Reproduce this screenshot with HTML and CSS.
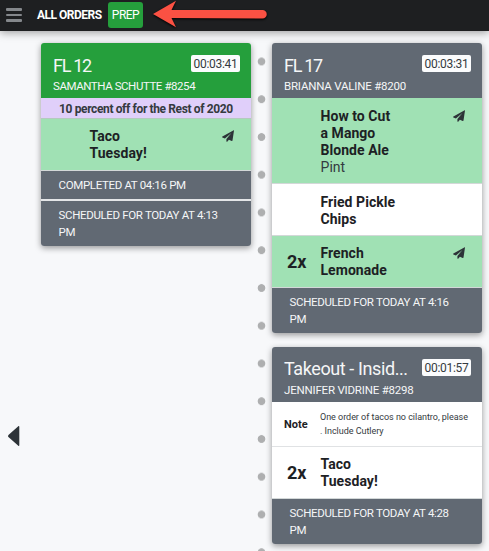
FILE: index.html
```html
<!DOCTYPE html>
<html lang="en">
<head>
    <meta charset="UTF-8">
    <meta name="viewport" content="width=device-width, initial-scale=1.0">
    <title>All Orders - Prep</title>
    <link rel="stylesheet" href="styles.css">
</head>
<body>
    <svg class="defs" width="0" height="0">
        <symbol id="plane" viewBox="0 0 12 12">
            <path d="M11.7 .2 .4 6.5c-.5.3-.4.8 0 1l2.5 1L9.4 2.9 4.4 9v2.2c0 .6.7.8 1 .4l1.5-1.8 2.8 1.2c.4.2.8 0 .8-.4L12 .6c.1-.4-.1-.5-.3-.4z"/>
        </symbol>
    </svg>

    <div class="header">
        <div class="menu-btn"><span></span><span></span><span></span></div>
        <div class="header-title">ALL ORDERS</div>
        <div class="prep-btn">PREP</div>
        <svg class="arrow" width="116" height="30" viewBox="0 0 116 30">
            <path d="M1 14 24 .7 19.500 10H110.500a4 4 0 0 1 0 8.500L19.500 18 24 27.200z"/>
        </svg>
    </div>

    <div class="board">
        <div class="gutter">
            <svg width="12" height="20" viewBox="0 0 12 20">
                <path d="M10.300.3.700 8.700a1.800 1.800 0 0 0 0 2.600l9.600 8.400c.5.400 1 .2 1-.4V.7c0-.6-.5-.8-1-.4z"/>
            </svg>
        </div>

        <div class="column">
            <div class="card">
                <div class="card-head green">
                    <div class="head-row">
                        <div class="table-name">FL 12</div>
                        <div class="timer">00:03:41</div>
                    </div>
                    <div class="customer long">SAMANTHA SCHUTTE #8254</div>
                </div>
                <div class="promo">10 percent off for the Rest of 2020</div>
                <div class="item sent">
                    <div class="qty"></div>
                    <div class="item-name">Taco<br>Tuesday!</div>
                    <svg class="plane"><use href="#plane"/></svg>
                </div>
                <div class="card-foot completed">COMPLETED AT 04:16 PM</div>
                <div class="card-foot">SCHEDULED FOR TODAY AT 4:13<br>PM</div>
            </div>
        </div>

        <div class="dots"></div>

        <div class="column">
            <div class="card">
                <div class="card-head">
                    <div class="head-row">
                        <div class="table-name">FL 17</div>
                        <div class="timer">00:03:31</div>
                    </div>
                    <div class="customer">BRIANNA VALINE #8200</div>
                </div>
                <div class="item sent roomy">
                    <div class="qty"></div>
                    <div class="item-name">How to Cut<br>a Mango<br>Blonde Ale<div class="modifier">Pint</div></div>
                    <svg class="plane"><use href="#plane"/></svg>
                </div>
                <div class="item roomy">
                    <div class="qty"></div>
                    <div class="item-name">Fried Pickle<br>Chips</div>
                </div>
                <div class="item sent">
                    <div class="qty">2x</div>
                    <div class="item-name">French<br>Lemonade</div>
                    <svg class="plane"><use href="#plane"/></svg>
                </div>
                <div class="card-foot">SCHEDULED FOR TODAY AT 4:16<br>PM</div>
            </div>

            <div class="card">
                <div class="card-head">
                    <div class="head-row">
                        <div class="table-name takeout">Takeout - Insid...</div>
                        <div class="timer">00:01:57</div>
                    </div>
                    <div class="customer">JENNIFER VIDRINE #8298</div>
                </div>
                <div class="note">
                    <div class="note-label">Note</div>
                    <div class="note-text">One order of tacos no cilantro, please<br>. Include Cutlery</div>
                </div>
                <div class="item">
                    <div class="qty">2x</div>
                    <div class="item-name">Taco<br>Tuesday!</div>
                </div>
                <div class="card-foot">SCHEDULED FOR TODAY AT 4:28<br>PM</div>
            </div>
        </div>
    </div>
</body>
</html>
```
FILE: styles.css
```css
* {
    margin: 0;
    padding: 0;
    box-sizing: border-box;
}

body {
    font-family: Roboto, 'Liberation Sans', sans-serif;
    background: #f7f8fa;
    color: #1d2124;
    height: 551px;
    overflow: hidden;
}

.defs {
    display: block;
}

.header {
    display: flex;
    align-items: flex-start;
    height: 31px;
    padding-left: 6px;
    background: #1e1f21;
    color: #ffffff;
    box-shadow: 0 2px 8px rgba(0, 0, 0, 0.35);
}

.menu-btn {
    display: flex;
    flex-direction: column;
    gap: 3px;
    width: 16px;
    margin-top: 8px;
}

.menu-btn span {
    height: 2.500px;
    border-radius: 1px;
    background: #85888c;
}

.header-title {
    width: 71px;
    margin-left: 15px;
    font-size: 12px;
    font-weight: 700;
    line-height: 30px;
    letter-spacing: -0.500px;
    white-space: nowrap;
}

.prep-btn {
    width: 35px;
    height: 26px;
    margin-top: 2px;
    border-radius: 3px;
    background: #259f3c;
    font-size: 12px;
    line-height: 26px;
    letter-spacing: -0.500px;
    text-align: center;
}

.arrow {
    margin-left: 9px;
    fill: #fb5143;
    filter: drop-shadow(0 1px 1px #000000);
}

.board {
    display: flex;
    height: 520px;
}

.gutter {
    width: 41px;
    padding: 395px 0 0 8px;
    fill: #2d3338;
}

.column {
    display: flex;
    flex-direction: column;
    gap: 14px;
    width: 210px;
    padding-top: 12px;
}

.dots {
    width: 21px;
    background: radial-gradient(circle at 10.500px 11px, #aeafb0 3.500px, transparent 4.200px) 0 19.500px / 21px 37.750px;
}

.card {
    border-radius: 3px;
    background: #ffffff;
    box-shadow: 0 2px 6px rgba(0, 0, 0, 0.4);
}

.card-head {
    height: 55px;
    padding: 12px 11px 0 12px;
    border-radius: 3px 3px 0 0;
    background: #616973;
    color: #f5f6f7;
}

.card-head.green {
    background: #259f3c;
}

.head-row {
    display: flex;
    justify-content: space-between;
    height: 23px;
}

.table-name {
    font-size: 18px;
    line-height: 22px;
    letter-spacing: -1.300px;
    white-space: nowrap;
}

.table-name.takeout {
    line-height: 20px;
    letter-spacing: -0.400px;
}

.timer {
    width: 49px;
    height: 17px;
    border-radius: 2px;
    background: #fbfcfd;
    color: #343a40;
    font-size: 12px;
    line-height: 18px;
    letter-spacing: -0.300px;
    text-align: center;
}

.customer {
    font-size: 11.500px;
    line-height: 17px;
    letter-spacing: -0.200px;
    white-space: nowrap;
}

.customer.long {
    letter-spacing: -0.430px;
}

.promo {
    height: 21px;
    padding-left: 18px;
    border-bottom: 1px solid #b5c9bf;
    background: #e0cffa;
    color: #343a40;
    font-size: 12px;
    font-weight: 700;
    line-height: 22px;
    letter-spacing: -0.370px;
    white-space: nowrap;
}

.item {
    display: flex;
    padding: 9px 17px 8px 15px;
    border-bottom: 1px solid #d3d8d8;
}

.item.roomy {
    padding-top: 10px;
    padding-bottom: 7px;
}

.item.sent {
    background: #a0e1b4;
}

.qty {
    align-self: center;
    width: 33.500px;
    font-size: 18px;
    font-weight: 700;
    line-height: 20px;
}

.item-name {
    flex: 1;
    font-size: 14px;
    font-weight: 700;
    line-height: 17px;
    letter-spacing: 0.050px;
    white-space: nowrap;
}

.modifier {
    color: #343a40;
    font-weight: 400;
}

.plane {
    width: 12px;
    height: 12px;
    margin-top: 2px;
    fill: #2d3338;
}

.note {
    display: flex;
    align-items: center;
    height: 45px;
    padding-left: 12px;
    border-bottom: 1px solid #e0e2e4;
}

.note-label {
    width: 36px;
    font-size: 11px;
    font-weight: 700;
}

.note-text {
    color: #343a40;
    font-size: 9px;
    line-height: 14px;
    letter-spacing: -0.030px;
    white-space: nowrap;
}

.card-foot {
    height: 45px;
    padding: 6px 0 0 17.500px;
    border-radius: 0 0 3px 3px;
    background: #616973;
    color: #f5f6f7;
    font-size: 11.500px;
    line-height: 17px;
    letter-spacing: -0.340px;
    white-space: nowrap;
}

.card-foot.completed {
    height: 30px;
    border-bottom: 2px solid #e4e6e8;
    border-radius: 0;
}
```
